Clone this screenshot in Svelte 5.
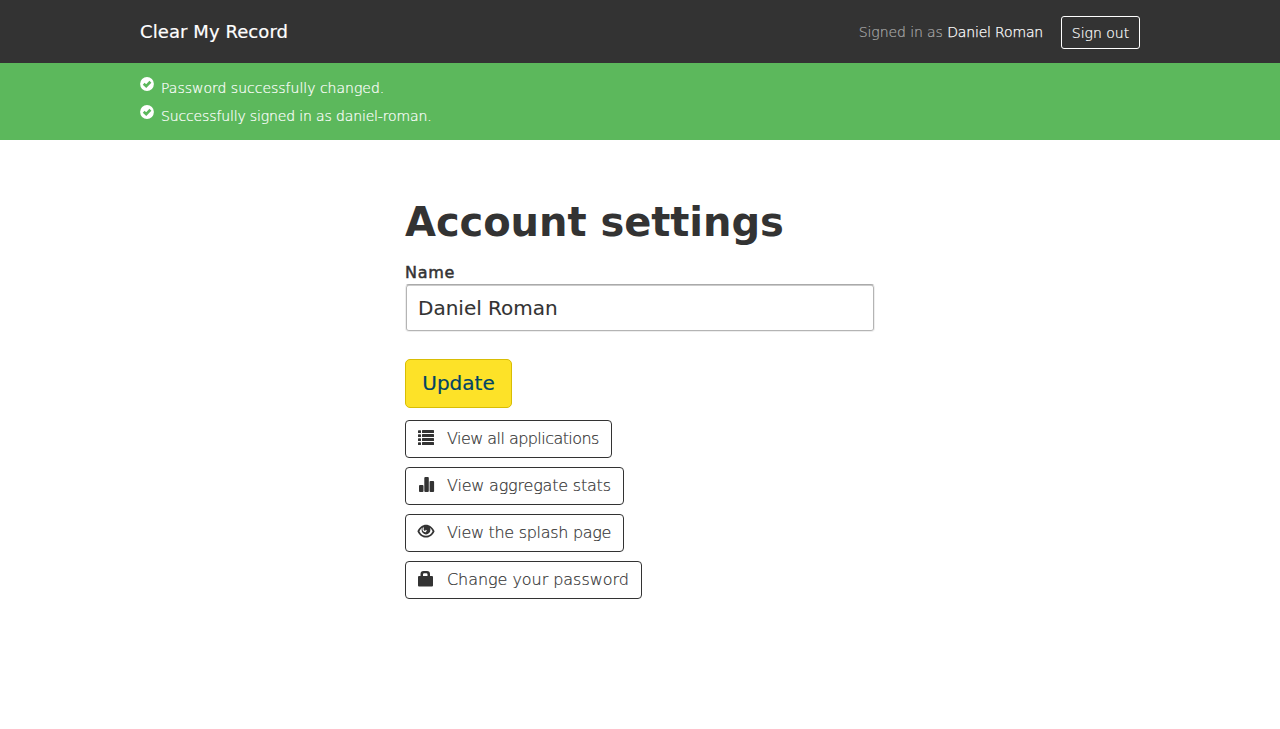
<script>
  const notices = [
    { text: 'Password successfully changed.', spacing: 0 },
    { text: 'Successfully signed in as daniel-roman.', spacing: -0.14 },
  ];
  const links = [
    { icon: 'list', label: 'View all applications', spacing: -0.55 },
    { icon: 'stats', label: 'View aggregate stats', spacing: -0.2 },
    { icon: 'eye', label: 'View the splash page', spacing: -0.3 },
    { icon: 'lock', label: 'Change your password', spacing: -0.05 },
  ];
  let name = $state('Daniel Roman');
</script>

<header>
  <div class="container bar">
    <a class="brand" href="#home">Clear My Record</a>
    <div class="session">
      <span class="who">Signed in as <a href="#account">Daniel Roman</a></span>
      <button class="signout" type="button">Sign out</button>
    </div>
  </div>
</header>

<div class="flash">
  <div class="container">
    {#each notices as notice}
      <div class="notice">
        <svg width="14" height="14" viewBox="0 0 14 14"><circle cx="7" cy="7" r="6.9" fill="#fff" /><path d="M3.7 6.7 6.2 9.1 10.4 4.7" fill="none" stroke="#5cb85c" stroke-width="2.7" /></svg>
        <span style="letter-spacing: {notice.spacing}px">{notice.text}</span>
      </div>
    {/each}
  </div>
</div>

<main>
  <h1>Account settings</h1>
  <label for="name">Name</label>
  <input id="name" type="text" bind:value={name} />
  <button class="update" type="button">Update</button>
  <nav>
    {#each links as link}
      <a class="action" href="#{link.icon}">
        <svg width="18" height="16" viewBox="0 0 18 16" fill="#333">
          {#if link.icon === 'list'}
            {#each [0, 4, 8, 12] as y}
              <rect x="1" y={y + 0.2} width="3" height="2.8" rx=".6" />
              <rect x="5" {y} width="12" height="3" rx=".5" />
            {/each}
          {:else if link.icon === 'stats'}
            <rect x="2" y="8" width="4.5" height="7" rx=".9" />
            <rect x="7.3" y="0" width="4.5" height="15" rx="1" />
            <rect x="12.6" y="4" width="4.5" height="11" rx=".9" />
          {:else if link.icon === 'eye'}
            <path fill-rule="evenodd" d="M.4 7.200C2.400 3.200 5.400.7 9 .7s6.600 2.500 8.600 6.500C15.800 11.200 12.600 13.500 9 13.500S2.200 11.200.4 7.200ZM2.400 7.200C3.800 10.200 6.200 11.800 9 11.800s5.200-1.600 6.600-4.600c-.7-1.500-1.600-2.700-2.700-3.500.4.800.5 1.500.5 2.300A4.400 4.400 0 0 1 9 10.400 4.400 4.400 0 0 1 4.600 6c0-.8.100-1.500.5-2.300-1.100.8-2 2-2.700 3.500Z" />
            <path d="M6.500 3.500C5.300 5.500 6.400 7.700 8.500 7.600L9.300 6" fill="none" stroke="#fff" stroke-width="1.200" />
          {:else}
            <path fill-rule="evenodd" d="M3.500 5V3Q3.500 0 6.500 0H10Q13 0 13 3V5H15Q16 5 16 6V14.500Q16 15.500 15 15.500H2Q1 15.500 1 14.500V6Q1 5 2 5ZM6 5H10.500V3.500Q10.500 2.300 9.300 2.300H7.200Q6 2.300 6 3.500Z" />
          {/if}
        </svg>
        <span style="letter-spacing: {link.spacing}px">{link.label}</span>
      </a>
    {/each}
  </nav>
</main>

<style>
  :global(body) {
    background: #fff;
    color: #333;
    font: 300 16px/24px "DejaVu Sans", sans-serif;
  }
  * { box-sizing: border-box; }
  a { color: inherit; text-decoration: none; }
  svg { display: block; flex: none; }
  header { height: 63px; background: #333; color: #fff; }
  .container { width: 1000px; margin: 0 auto; }
  .bar { height: 63px; display: flex; align-items: center; justify-content: space-between; }
  .brand { font-size: 18px; font-weight: 500; letter-spacing: .08px; -webkit-text-stroke: .2px; }
  .session { display: flex; align-items: center; gap: 18px; padding-top: 1px; font-size: 14px; }
  .who { color: #aaa; letter-spacing: -.08px; -webkit-text-stroke: .2px; }
  .who a { color: #fff; letter-spacing: -.17px; -webkit-text-stroke: .25px; }
  button { font-family: inherit; cursor: pointer; }
  .signout {
    width: 79px; height: 33px; padding: 1px 0 0; color: #fff; background: transparent;
    border: 1px solid #fff; border-radius: 3px; font-size: 14px; font-weight: 300;
    -webkit-text-stroke: .2px;
  }
  .flash { height: 77px; padding-top: 11px; background: #5cb85c; color: #fff; font-size: 14px; -webkit-text-stroke: .2px; }
  .notice { display: flex; gap: 7px; height: 28px; padding-top: 3px; line-height: 22px; }
  main { width: 470px; margin: 0 auto; padding-top: 58px; }
  h1 { margin: 0; font-size: 40px; line-height: 48px; font-weight: 700; letter-spacing: -.06px; }
  label { display: block; margin-top: 14px; height: 24px; padding-top: 1px; line-height: 23px; font-size: 16px; font-weight: 500; letter-spacing: .7px; -webkit-text-stroke: .5px; }
  input {
    display: block; width: 470px; height: 48px; padding: 0 12px; color: #333; background: #fff;
    border: 1px solid #eee; border-top-color: #aaa; border-radius: 4px;
    box-shadow: inset 1px 0 #b4b4b4, inset -1px 0 #b4b4b4, inset 0 -1px #b4b4b4, inset 0 1px #ccc;
    font: 500 20px "DejaVu Sans", sans-serif;
    -webkit-text-stroke: .1px;
  }
  .update {
    display: block; width: 107px; height: 49px; margin-top: 27px; padding: 0 0 2px; color: #046;
    background: #fde228; border: 1px solid #d8bd04; border-radius: 5px; font-size: 20px; font-weight: 500;
    -webkit-text-stroke: .2px;
  }
  nav { display: flex; flex-direction: column; align-items: flex-start; gap: 9px; margin-top: 12px; }
  .action {
    display: flex; height: 38px; gap: 12px; padding: 9px 12px 0 11px;
    border: 1px solid #333; border-radius: 4px; line-height: 18px;
    -webkit-text-stroke: .2px;
  }
</style>
